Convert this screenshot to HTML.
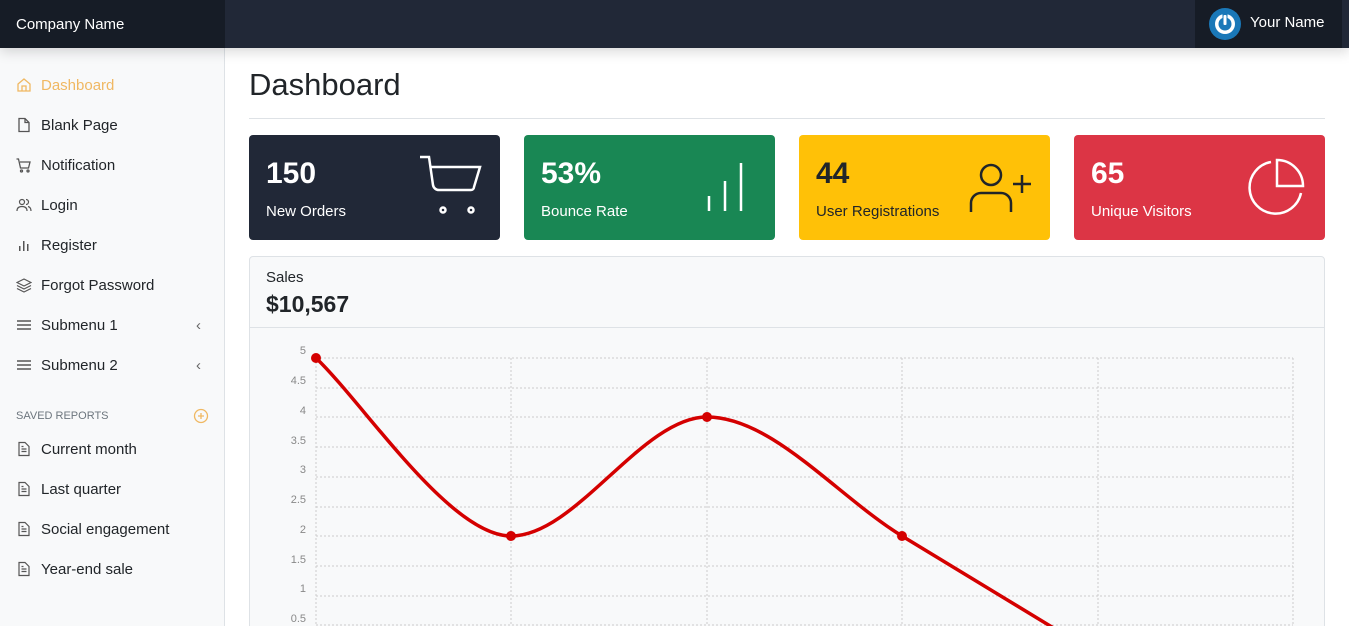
<!DOCTYPE html>
<html style="overflow:hidden;width:1349px;height:626px"><head><meta charset="utf-8"><style>
*{box-sizing:border-box;margin:0;padding:0}
body{width:1349px;height:626px;overflow:hidden;background:#fff;font-family:"Liberation Sans",sans-serif;color:#212529;position:relative}
.top{position:absolute;left:0;top:0;width:1349px;height:48px;background:#212837;box-shadow:0 4px 12px rgba(0,0,0,.15);z-index:2}
.brand{position:absolute;left:0;top:0;width:225px;height:48px;background:#161c26;color:#fff;font-size:15px;line-height:50px;padding-left:16px}
.user{position:absolute;left:1195px;top:0;width:147px;height:48px;background:#161c26;color:#fff;font-size:15px}
.user span{position:absolute;left:55px;top:14px}
.side{position:absolute;left:0;top:48px;width:225px;height:578px;background:#f8f9fa;border-right:1px solid #dee2e6}
.it{position:absolute;left:16px;font-size:15px;color:#212529;height:20px;line-height:20px}
.it svg{position:absolute;left:0;top:1px}
.it span{position:absolute;left:25px;white-space:nowrap}
.hd{position:absolute;left:16px;top:362px;font-size:11px;color:#6c757d}
h1{position:absolute;left:249px;top:67px;font-size:31px;font-weight:400}
.hr{position:absolute;left:249px;top:118px;width:1076px;border-top:1px solid #dee2e6}
.card{position:absolute;top:135px;width:251px;height:105px;border-radius:4px;color:#fff}
.card b{position:absolute;left:17px;top:22px;font-size:30px}
.card i{position:absolute;left:17px;top:68px;font-size:15px;font-style:normal}
.card svg{position:absolute}
.panel{position:absolute;left:249px;top:256px;width:1076px;height:380px;border:1px solid #dee2e6;border-radius:4px;background:#f8f9fa}
.ph{height:71px;border-bottom:1px solid #dee2e6}
.yl{position:absolute;font-size:11px;color:#888;text-align:right;width:40px;left:266px}
</style></head><body>
<div class="top"><div class="brand">Company Name</div>
<div class="user"><svg width="34" height="34" style="position:absolute;left:13px;top:7px" viewBox="0 0 34 34"><circle cx="17" cy="17" r="16" fill="#1a78b8"/><circle cx="17" cy="17" r="10" fill="#fff"/><circle cx="17" cy="17" r="6.5" fill="#1a78b8"/><rect x="14.5" y="5" width="5" height="13" fill="#1a78b8"/><rect x="15.5" y="8" width="3" height="10" fill="#fff" rx="1"/></svg><span>Your Name</span></div></div>
<div class="side">
<div class="it" style="top:28px;color:#f0b862"><svg width="16" height="16" viewBox="0 0 16 16" fill="none" stroke="#f0b862" stroke-width="1.3"><path d="M2 7L8 2l6 5v7H2z"/><path d="M6 14V9h4v5"/></svg><span>Dashboard</span></div>
<div class="it" style="top:68px"><svg width="16" height="16" viewBox="0 0 16 16" fill="none" stroke="#555" stroke-width="1.3"><path d="M3 1.5h6l4 4v9H3z"/><path d="M9 1.5v4h4"/></svg><span>Blank Page</span></div>
<div class="it" style="top:108px"><svg width="16" height="16" viewBox="0 0 16 16" fill="none" stroke="#555" stroke-width="1.3"><path d="M0.5 2h2l2 9h8l1.5-6H4"/><circle cx="5.5" cy="14" r="1"/><circle cx="12" cy="14" r="1"/></svg><span>Notification</span></div>
<div class="it" style="top:148px"><svg width="16" height="16" viewBox="0 0 16 16" fill="none" stroke="#555" stroke-width="1.2"><circle cx="6" cy="5" r="2.5"/><path d="M1 14c0-3 2-4.5 5-4.5s5 1.5 5 4.5"/><path d="M10 2.5a2.5 2.5 0 010 5M12 9.5c2 .5 3 2 3 4.5"/></svg><span>Login</span></div>
<div class="it" style="top:188px"><svg width="16" height="16" viewBox="0 0 16 16" fill="#555"><rect x="3" y="9" width="1.5" height="5"/><rect x="7" y="4" width="1.5" height="10"/><rect x="11" y="7" width="1.5" height="7"/></svg><span>Register</span></div>
<div class="it" style="top:228px"><svg width="16" height="16" viewBox="0 0 16 16" fill="none" stroke="#555" stroke-width="1.2"><path d="M8 2l7 3.5-7 3.5-7-3.5z"/><path d="M1 8.5L8 12l7-3.5M1 11.5L8 15l7-3.5"/></svg><span>Forgot Password</span></div>
<div class="it" style="top:268px"><svg width="16" height="16" viewBox="0 0 16 16" stroke="#555" stroke-width="1.5"><path d="M1 4h14M1 8h14M1 12h14"/></svg><span>Submenu 1</span><span style="left:180px;color:#666">&#8249;</span></div>
<div class="it" style="top:308px"><svg width="16" height="16" viewBox="0 0 16 16" stroke="#555" stroke-width="1.5"><path d="M1 4h14M1 8h14M1 12h14"/></svg><span>Submenu 2</span><span style="left:180px;color:#666">&#8249;</span></div>
<div class="hd">SAVED REPORTS</div>
<svg width="16" height="16" style="position:absolute;left:193px;top:360px" viewBox="0 0 16 16" fill="none" stroke="#f0b862" stroke-width="1.3"><circle cx="8" cy="8" r="6.5"/><path d="M8 5v6M5 8h6"/></svg>
<div class="it" style="top:392px"><svg width="16" height="16" viewBox="0 0 16 16" fill="none" stroke="#555" stroke-width="1.2"><path d="M3 1.5h6l4 4v9H3z"/><path d="M5.5 8h5M5.5 10.5h5M5.5 5.5h2"/></svg><span>Current month</span></div>
<div class="it" style="top:432px"><svg width="16" height="16" viewBox="0 0 16 16" fill="none" stroke="#555" stroke-width="1.2"><path d="M3 1.5h6l4 4v9H3z"/><path d="M5.5 8h5M5.5 10.5h5M5.5 5.5h2"/></svg><span>Last quarter</span></div>
<div class="it" style="top:472px"><svg width="16" height="16" viewBox="0 0 16 16" fill="none" stroke="#555" stroke-width="1.2"><path d="M3 1.5h6l4 4v9H3z"/><path d="M5.5 8h5M5.5 10.5h5M5.5 5.5h2"/></svg><span>Social engagement</span></div>
<div class="it" style="top:512px"><svg width="16" height="16" viewBox="0 0 16 16" fill="none" stroke="#555" stroke-width="1.2"><path d="M3 1.5h6l4 4v9H3z"/><path d="M5.5 8h5M5.5 10.5h5M5.5 5.5h2"/></svg><span>Year-end sale</span></div>
</div>
<h1>Dashboard</h1><div class="hr"></div>
<div class="card" style="left:249px;background:#212837"><b>150</b><i>New Orders</i><svg style="left:168px;top:18px" width="66" height="66" viewBox="0 0 66 66" fill="none" stroke="#fff" stroke-width="2.5"><path d="M3 4h9l4 28a6 6 0 006 5h32a3 3 0 003-3l6-20H14"/><circle cx="26" cy="57" r="2.5"/><circle cx="54" cy="57" r="2.5"/></svg></div>
<div class="card" style="left:524px;background:#198754"><b>53%</b><i>Bounce Rate</i><svg style="left:180px;top:25px" width="50" height="55" viewBox="0 0 50 55" stroke="#fff" stroke-width="2.5"><path d="M5 36v15M21 21v30M37 3v48"/></svg></div>
<div class="card" style="left:799px;background:#ffc107;color:#212529"><b>44</b><i>User Registrations</i><svg style="left:168px;top:25px" width="70" height="58" viewBox="0 0 70 58" fill="none" stroke="#212529" stroke-width="2.5"><circle cx="24" cy="15" r="10"/><path d="M4 52V43a10 10 0 0110-10h20a10 10 0 0110 10v9"/><path d="M46 24h18M55 15v18"/></svg></div>
<div class="card" style="left:1074px;background:#dc3545"><b>65</b><i>Unique Visitors</i><svg style="left:172px;top:22px" width="62" height="62" viewBox="0 0 62 62" fill="none" stroke="#fff" stroke-width="2.5"><path d="M25 5A26 26 0 1055 36"/><path d="M31 3a26 26 0 0126 26H31z"/></svg></div>
<div class="panel"><div class="ph"><div style="position:absolute;left:16px;top:12px;font-size:15px">Sales</div><div style="position:absolute;left:16px;top:34px;font-size:23px;font-weight:bold">$10,567</div></div></div>
<div class="yl" style="top:345px">5</div><div class="yl" style="top:375px">4.5</div><div class="yl" style="top:405px">4</div><div class="yl" style="top:435px">3.5</div><div class="yl" style="top:464px">3</div><div class="yl" style="top:494px">2.5</div><div class="yl" style="top:524px">2</div><div class="yl" style="top:554px">1.5</div><div class="yl" style="top:583px">1</div><div class="yl" style="top:613px">0.5</div>
<svg style="position:absolute;left:0;top:0" width="1349" height="626">
<g stroke="#ccc" stroke-width="1" stroke-dasharray="2,2">
<path d="M316 358H1293M316 388H1293M316 417H1293M316 447H1293M316 477H1293M316 507H1293M316 536H1293M316 566H1293M316 596H1293M316 625H1293"/>
<path d="M316 358V626M511 358V626M707 358V626M902 358V626M1098 358V626M1293 358V626"/>
</g>
<path d="M316 358C365 405 450 536 511 536C576 536 642 417 707 417C772 417 837 496 902 536C967 576 1033 615 1098 655" fill="none" stroke="#d40000" stroke-width="3.5"/>
<g fill="#d40000"><circle cx="316" cy="358" r="5"/><circle cx="511" cy="536" r="5"/><circle cx="707" cy="417" r="5"/><circle cx="902" cy="536" r="5"/></g>
</svg>
</body></html>
